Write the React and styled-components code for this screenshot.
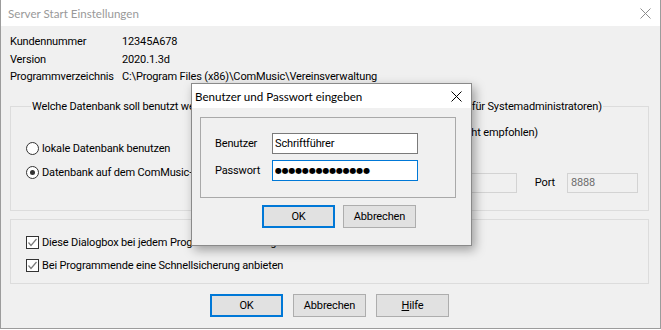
import React from "react";
import styled, { createGlobalStyle } from "styled-components";

const GlobalStyle = createGlobalStyle`
  html, body {
    margin: 0;
    padding: 0;
    background: #ffffff;
  }
  body {
    font-family: Roboto, "Noto Sans", sans-serif;
    font-size: 11px;
    letter-spacing: -0.15px;
    color: #000000;
  }
`;

const Window = styled.div`
  position: relative;
  width: 661px;
  height: 329px;
  box-sizing: border-box;
  border: 1px solid #9c9c9c;
  border-top: none;
  display: flex;
  flex-direction: column;
  background: #f0f0f0;
`;

const TitleBar = styled.div`
  height: 26px;
  flex-shrink: 0;
  background: #ffffff;
  display: flex;
  align-items: center;
  justify-content: space-between;
  padding: 0 9px 0 7px;
  font-family: Lato, "Noto Sans", sans-serif;
  font-size: 11.6px;
  letter-spacing: 0;
  color: ${({ active }) => (active ? "#000000" : "#999999")};
`;

const CloseIcon = ({ color }) => (
  <svg width="11" height="11" viewBox="0 0 11 11">
    <path d="M0.5 0.5 L10.5 10.5 M10.5 0.5 L0.5 10.5" stroke={color} strokeWidth="1" fill="none" />
  </svg>
);

const Body = styled.div`
  flex: 1;
  padding: 7px 11px 0 9px;
  display: flex;
  flex-direction: column;
`;

const InfoGrid = styled.div`
  display: grid;
  grid-template-columns: 112px 1fr;
  grid-auto-rows: 17.5px;
  align-items: center;
  white-space: nowrap;
`;

const GroupBox = styled.fieldset`
  margin: ${({ top }) => top}px 0 0 0;
  padding: ${({ pad }) => pad};
  border: 1px solid #dcdcdc;
  min-width: 0;
  display: flex;
  flex-direction: column;
`;

const Legend = styled.legend`
  margin-left: 5px;
  padding: 0 1px;
  white-space: nowrap;
`;

const OptionRow = styled.div`
  display: flex;
  align-items: ${({ align }) => align || "center"};
  min-height: 16px;
  margin-top: ${({ top }) => top || 0}px;
`;

const Option = styled.label`
  display: flex;
  align-items: center;
  height: 16px;
  gap: 3px;
  white-space: nowrap;
`;

const RadioCircle = styled.span`
  width: 11px;
  height: 11px;
  border: 1px solid #333333;
  border-radius: 50%;
  background: #ffffff;
  display: flex;
  align-items: center;
  justify-content: center;
  &::after {
    content: "";
    width: 5px;
    height: 5px;
    border-radius: 50%;
    background: ${({ checked }) => (checked ? "#333333" : "transparent")};
  }
`;

const CheckBox = styled.span`
  width: 11px;
  height: 11px;
  border: 1px solid #333333;
  background: #ffffff;
  display: flex;
  align-items: center;
  justify-content: center;
`;

const CheckMark = () => (
  <svg width="11" height="11" viewBox="0 0 11 11">
    <path d="M1.5 5.5 L4 8.5 L9.5 2" stroke="#7a7a7a" strokeWidth="1.2" fill="none" />
  </svg>
);

const NoteRow = styled.div`
  display: flex;
  justify-content: flex-end;
  padding-right: 110px;
  height: 16px;
  align-items: center;
  white-space: nowrap;
`;

const ServerGroup = styled.div`
  margin-left: auto;
  margin-right: 10px;
  margin-top: 8px;
  display: flex;
  align-items: center;
`;

const PortLabel = styled.span`
  margin: 0 12px 0 18px;
`;

const DisabledInput = styled.div`
  width: ${({ w }) => w}px;
  height: 18px;
  box-sizing: content-box;
  border: 1px solid #d3d3d3;
  background: #f0f0f0;
  color: #6d6d6d;
  display: flex;
  align-items: center;
  padding-left: 3px;
`;

const ButtonRow = styled.div`
  display: flex;
  justify-content: ${({ justify }) => justify || "center"};
  gap: ${({ gap }) => gap}px;
  margin-top: ${({ top }) => top}px;
  padding-left: ${({ left }) => left || 0}px;
`;

const Button = styled.button`
  width: 73px;
  height: 23px;
  box-sizing: border-box;
  background: #e1e1e1;
  border: ${({ primary }) => (primary ? "2px solid #0078d7" : "1px solid #adadad")};
  font: inherit;
  letter-spacing: inherit;
  color: #000000;
  padding: 0;
`;

const Modal = styled.div`
  position: absolute;
  left: 190px;
  top: 83px;
  width: 281px;
  height: 163px;
  box-sizing: border-box;
  border: 1px solid #8a8a8a;
  background: #f0f0f0;
  box-shadow: 3px 4px 10px rgba(0, 0, 0, 0.35);
  display: flex;
  flex-direction: column;
`;

const ModalTitle = styled(TitleBar)`
  height: 24px;
  padding: 0 9px 0 3px;
`;

const ModalBody = styled.div`
  padding: 9px 15px 0 8px;
  display: flex;
  flex-direction: column;
`;

const LoginBox = styled.div`
  border: 1px solid #a9a9a9;
  padding: 15px 0 16px 14px;
  display: grid;
  grid-template-columns: 57px 146px;
  row-gap: 6px;
  align-items: center;
`;

const TextField = styled.input`
  width: 146px;
  height: 21px;
  box-sizing: border-box;
  border: 1px solid ${({ focused }) => (focused ? "#0078d7" : "#7a7a7a")};
  background: #ffffff;
  font-family: ${({ dots }) => (dots ? '"DejaVu Sans", sans-serif' : "inherit")};
  font-size: ${({ dots }) => (dots ? "8px" : "11px")};
  letter-spacing: ${({ dots }) => (dots ? "-0.2px" : "-0.15px")};
  padding: 0 0 0 2px;
  outline: none;
  color: #000000;
`;

export default function App() {
  return (
    <>
      <GlobalStyle />
      <Window>
        <TitleBar>
          <span>Server Start Einstellungen</span>
          <CloseIcon color="#8c8c8c" />
        </TitleBar>
        <Body>
          <InfoGrid>
            <span>Kundennummer</span>
            <span>12345A678</span>
            <span>Version</span>
            <span>2020.1.3d</span>
            <span>Programmverzeichnis</span>
            <span>C:\Program Files (x86)\ComMusic\Vereinsverwaltung</span>
          </InfoGrid>

          <GroupBox top={14} pad="12px 0 17px 15px">
            <Legend>
              Welche Datenbank soll benutzt werden? (Achtung – diese Einstellungen sind nur vorgesehen für Systemadministratoren)
            </Legend>
            <NoteRow>Zugriff über das Netzwerk (nicht empfohlen)</NoteRow>
            <OptionRow>
              <Option>
                <RadioCircle />
                lokale Datenbank benutzen
              </Option>
            </OptionRow>
            <OptionRow align="flex-start" top={8}>
              <Option>
                <RadioCircle checked />
                Datenbank auf dem ComMusic-Server benutzen
              </Option>
              <ServerGroup>
                <DisabledInput w={80} />
                <PortLabel>Port</PortLabel>
                <DisabledInput w={66}>8888</DisabledInput>
              </ServerGroup>
            </OptionRow>
          </GroupBox>

          <GroupBox top={8} pad="15px 0 9px 15px">
            <OptionRow>
              <Option>
                <CheckBox>
                  <CheckMark />
                </CheckBox>
                Diese Dialogbox bei jedem Programmstart anzeigen
              </Option>
            </OptionRow>
            <OptionRow top={7}>
              <Option>
                <CheckBox>
                  <CheckMark />
                </CheckBox>
                Bei Programmende eine Schnellsicherung anbieten
              </Option>
            </OptionRow>
          </GroupBox>

          <ButtonRow gap={10} top={10}>
            <Button primary>OK</Button>
            <Button>Abbrechen</Button>
            <Button>
              <u>H</u>ilfe
            </Button>
          </ButtonRow>
        </Body>

        <Modal>
          <ModalTitle active>
            <span>Benutzer und Passwort eingeben</span>
            <CloseIcon color="#000000" />
          </ModalTitle>
          <ModalBody>
            <LoginBox>
              <span>Benutzer</span>
              <TextField readOnly value="Schriftführer" />
              <span>Passwort</span>
              <TextField readOnly dots focused value="●●●●●●●●●●●●●●" />
            </LoginBox>
            <ButtonRow justify="flex-start" gap={8} top={7} left={62}>
              <Button primary>OK</Button>
              <Button>Abbrechen</Button>
            </ButtonRow>
          </ModalBody>
        </Modal>
      </Window>
    </>
  );
}
